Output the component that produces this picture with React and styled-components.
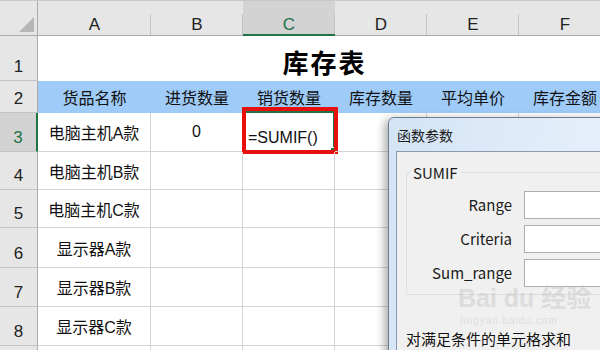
import React from "react";
import styled, { createGlobalStyle } from "styled-components";

const GlobalStyle = createGlobalStyle`
    body{
        margin:0;
        background:#fff;
        overflow:hidden;
    }
`
const Page = styled.div`
    position:relative;
    width:600px;
    height:350px;
    overflow:hidden;
    border-top:1px solid #c8c8c8;
    box-sizing:border-box;
    font-family:"Liberation Sans","Noto Sans CJK SC",sans-serif;
`
const Sheet = styled.div`
    display:grid;
    grid-template-columns:38px 113px repeat(5, 92px);
    grid-template-rows:35px 45px 32px 39px 38px 38px 40px 39px 39px 39px;
`
const Corner = styled.div`
    background:#e6e6e6;
    border-right:1px solid #ababab;
    border-bottom:1px solid #ababab;
    box-sizing:border-box;
    display:flex;
    justify-content:flex-end;
    align-items:flex-end;
    padding:0 3px 3px 0;
`
const Triangle = styled.div`
    width:0;
    height:0;
    border-left:15px solid transparent;
    border-bottom:15px solid #b6b6b6;
`
const ColHead = styled.div`
    position:relative;
    background:${p => p.$active ? "#d3d3d3" : "#e6e6e6"};
    color:${p => p.$active ? "#217346" : "#222"};
    border-bottom:${p => p.$active ? "2px solid #217346" : "1px solid #ababab"};
    box-sizing:border-box;
    display:flex;
    justify-content:center;
    align-items:flex-end;
    padding-bottom:${p => p.$active ? "0" : "1px"};
    font-size:17px;
    line-height:18px;
    &::after{
        content:"";
        position:absolute;
        right:0;
        top:13px;
        bottom:0;
        width:1px;
        background:#c4c4c4;
    }
`
const RowHead = styled.div`
    background:${p => p.$active ? "#d3d3d3" : "#e6e6e6"};
    color:${p => p.$active ? "#217346" : "#222"};
    border-right:${p => p.$active ? "2px solid #217346" : "1px solid #ababab"};
    border-bottom:1px solid #c4c4c4;
    box-sizing:border-box;
    display:flex;
    justify-content:center;
    align-items:flex-end;
    padding-bottom:3px;
    font-size:17px;
`
const TitleCell = styled.div`
    grid-column:span 6;
    display:flex;
    justify-content:center;
    align-items:center;
    padding-top:6px;
    font-size:26px;
    font-weight:bold;
    letter-spacing:2px;
    color:#000;
`
const HeadCell = styled.div`
    background:#9ecbf8;
    display:flex;
    justify-content:center;
    align-items:center;
    font-size:16px;
    color:#111;
    white-space:nowrap;
`
const Cell = styled.div`
    position:relative;
    border-right:1px solid #d4d4d4;
    border-bottom:1px solid #d4d4d4;
    box-sizing:border-box;
    display:flex;
    justify-content:${p => p.$left ? "flex-start" : "center"};
    align-items:${p => p.$left ? "flex-end" : "center"};
    padding:${p => p.$left ? "0 0 4px 5px" : "0"};
    font-size:16px;
    color:#111;
    white-space:nowrap;
`
const ActiveFrame = styled.div`
    position:absolute;
    left:-1px;
    top:-2px;
    right:-1px;
    bottom:-1px;
    border:2px solid #217346;
    pointer-events:none;
    &::after{
        content:"";
        position:absolute;
        right:-4px;
        bottom:-4px;
        width:5px;
        height:5px;
        background:#217346;
        border:1px solid #fff;
    }
`
const Callout = styled.div`
    position:absolute;
    left:-1px;
    top:-6px;
    right:-4px;
    bottom:-3px;
    border:4px solid #e8100c;
    pointer-events:none;
`
const Dialog = styled.div`
    position:absolute;
    left:388px;
    top:116px;
    width:240px;
    height:260px;
    border:1px solid #6f7d8c;
    border-radius:6px 0 0 0;
    background:linear-gradient(100deg, #d3e4f6 0%, #e4eefa 70%, #e8f1fb 100%);
    box-shadow:-3px 2px 10px rgba(0,0,0,0.35);
    display:flex;
    flex-direction:column;
    font-family:"Noto Sans CJK SC","Noto Sans",sans-serif;
`
const TitleBar = styled.div`
    height:33px;
    display:flex;
    align-items:center;
    padding-left:8px;
    font-size:14px;
    color:#1a1a1a;
`
const DialogBody = styled.div`
    flex:1;
    margin-left:7px;
    background:#f0f0f0;
    border-top:1px solid #8a9bb0;
    border-left:1px solid #8a9bb0;
    padding:10px 0 0 9px;
`
const Group = styled.fieldset`
    margin:0;
    padding:8px 0 7px 0;
    border:1px solid #d5dfe5;
    border-radius:3px;
    display:grid;
    grid-template-columns:105px 1fr;
    column-gap:12px;
    row-gap:6px;
`
const Legend = styled.legend`
    margin-left:3px;
    padding:0 3px;
    font-size:15px;
    color:#1a1a1a;
`
const Label = styled.div`
    text-align:right;
    line-height:28px;
    font-size:15px;
    color:#1a1a1a;
`
const Field = styled.div`
    height:28px;
    background:#fff;
    border:1px solid #abadb3;
    box-sizing:border-box;
`
const Hint = styled.div`
    margin-top:33px;
    font-size:15px;
    color:#111;
`
const Watermark = styled.div`
    position:absolute;
    left:458px;
    top:283px;
    display:flex;
    flex-direction:column;
    gap:3px;
    color:rgba(200,200,200,0.5);
    font-family:"Liberation Sans","Noto Sans CJK SC",sans-serif;
    white-space:nowrap;
    pointer-events:none;
`
const MarkLogo = styled.div`
    font-weight:bold;
    font-size:25px;
    line-height:28px;
`
const MarkUrl = styled.div`
    font-size:10px;
    line-height:11px;
    letter-spacing:1px;
    padding-left:2px;
`

const columns = ["A","B","C","D","E","F"];
const heads = ["货品名称","进货数量","销货数量","库存数量","平均单价","库存金额"];
const items = ["电脑主机A款","电脑主机B款","电脑主机C款","显示器A款","显示器B款","显示器C款",""];

const App = () => {
    return (
        <>
            <GlobalStyle/>
            <Page>
                <Sheet>
                    <Corner><Triangle/></Corner>
                    {columns.map((c)=>(
                        <ColHead key={c} $active={c==="C"}>{c}</ColHead>
                    ))}

                    <RowHead>1</RowHead>
                    <TitleCell>库存表</TitleCell>

                    <RowHead>2</RowHead>
                    {heads.map((h)=>(
                        <HeadCell key={h}>{h}</HeadCell>
                    ))}

                    {items.map((name,i)=>(
                        <React.Fragment key={i}>
                            <RowHead $active={i===0}>{i===6 ? "" : i+3}</RowHead>
                            <Cell>{name}</Cell>
                            <Cell>{i===0 ? "0" : ""}</Cell>
                            {i===0 ? (
                                <Cell $left>
                                    =SUMIF()
                                    <ActiveFrame/>
                                    <Callout/>
                                </Cell>
                            ) : <Cell/>}
                            <Cell/>
                            <Cell/>
                            <Cell/>
                        </React.Fragment>
                    ))}
                </Sheet>

                <Dialog>
                    <TitleBar>函数参数</TitleBar>
                    <DialogBody>
                        <Group>
                            <Legend>SUMIF</Legend>
                            <Label>Range</Label>
                            <Field/>
                            <Label>Criteria</Label>
                            <Field/>
                            <Label>Sum_range</Label>
                            <Field/>
                        </Group>
                        <Hint>对满足条件的单元格求和</Hint>
                    </DialogBody>
                </Dialog>
                <Watermark>
                    <MarkLogo>Bai du 经验</MarkLogo>
                    <MarkUrl>jingyan.baidu.com</MarkUrl>
                </Watermark>
            </Page>
        </>
    );
};

export default App;
